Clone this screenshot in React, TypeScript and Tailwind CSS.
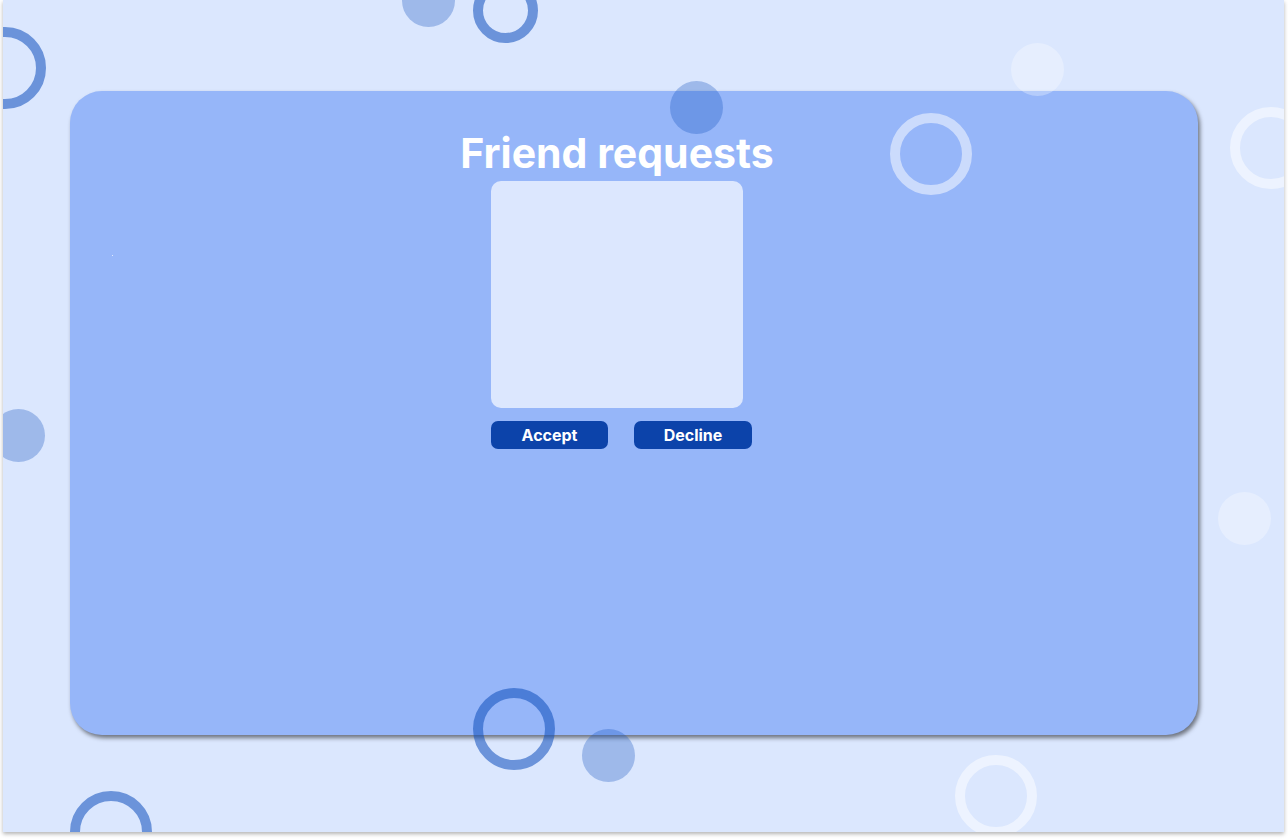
import React from "react";

type C = { x: number; y: number; kind: "ring" | "ringSm" | "dot"; tone: "dark" | "light" };

const circles: C[] = [
  { x: 4.5, y: 67.5, kind: "ring", tone: "dark" },
  { x: 428.5, y: 0, kind: "dot", tone: "dark" },
  { x: 505, y: 10, kind: "ringSm", tone: "dark" },
  { x: 696.5, y: 107.5, kind: "dot", tone: "dark" },
  { x: 931, y: 153.5, kind: "ring", tone: "light" },
  { x: 1037.5, y: 69, kind: "dot", tone: "light" },
  { x: 1271, y: 148, kind: "ring", tone: "light" },
  { x: 1244.5, y: 518, kind: "dot", tone: "light" },
  { x: 18.5, y: 435.3, kind: "dot", tone: "dark" },
  { x: 514, y: 728.5, kind: "ring", tone: "dark" },
  { x: 608.3, y: 755.3, kind: "dot", tone: "dark" },
  { x: 111, y: 832, kind: "ring", tone: "dark" },
  { x: 996, y: 796, kind: "ring", tone: "light" },
];

function Circle({ c }: { c: C }) {
  const size = c.kind === "ring" ? 82 : c.kind === "ringSm" ? 65 : 53;
  let cls = "absolute rounded-full pointer-events-none z-10 ";
  if (c.kind === "dot") {
    cls += c.tone === "dark" ? "bg-[rgba(15,78,188,0.3)]" : "bg-[rgba(255,255,255,0.3)]";
  } else {
    cls += "border-[10px] " + (c.tone === "dark" ? "border-[rgba(15,78,188,0.55)]" : "border-[rgba(255,255,255,0.5)]");
  }
  return (
    <div
      className={cls}
      style={{ width: size, height: size, left: c.x - 3 - size / 2, top: c.y - size / 2 }}
    />
  );
}

export default function App() {
  return (
    <div className="w-[1288px] h-[840px] bg-white" style={{ fontFamily: "Inter, 'Noto Sans', sans-serif" }}>
      <div className="relative ml-[3px] w-[1281px] h-[832px] bg-[#dbe7fe] overflow-hidden shadow-[0_2px_4px_rgba(0,0,0,0.3)] pt-[91px] pl-[67px]">
        <div className="relative w-[1128px] h-[644px] rounded-[32px] bg-[#96b6f9] shadow-[2px_3px_4px_rgba(0,0,0,0.5)] flex flex-col items-center pt-[38px] pr-[34px]">
          <span className="absolute left-[42px] top-[164px] w-px h-px bg-white/70" />
          <h1 className="text-[41px] leading-[48px] font-bold text-white">Friend requests</h1>
          <div className="w-[252px] mt-[4px]">
            <div className="w-[252px] h-[227px] rounded-[10px] bg-[#dce7fe]" />
            <div className="flex gap-[26px] mt-[13px] w-[300px]">
              <button className="shrink-0 w-[117px] h-[28px] rounded-[7px] bg-[#0c43aa] text-white text-[16px] font-bold leading-none flex items-center justify-center">
                Accept
              </button>
              <button className="shrink-0 w-[118px] h-[28px] rounded-[7px] bg-[#0c43aa] text-white text-[16px] font-bold leading-none flex items-center justify-center">
                Decline
              </button>
            </div>
          </div>
        </div>
        {circles.map((c, i) => (
          <Circle key={i} c={c} />
        ))}
      </div>
    </div>
  );
}
